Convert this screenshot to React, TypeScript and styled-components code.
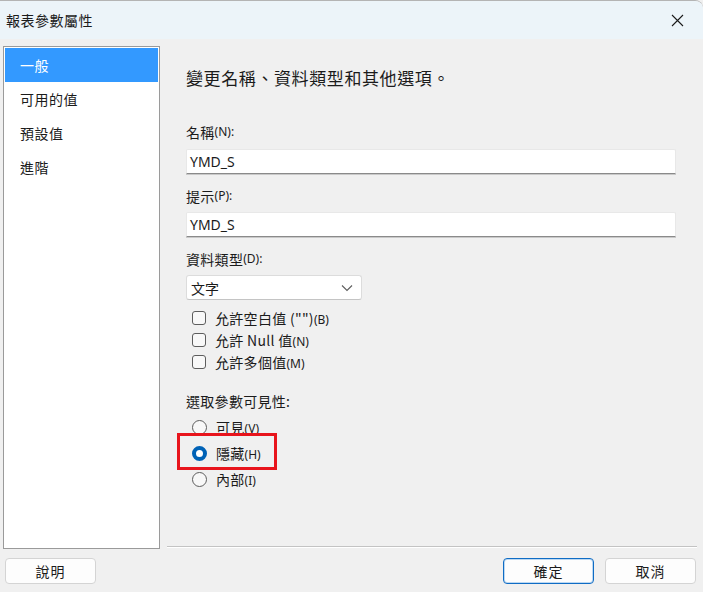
import styled, { createGlobalStyle } from 'styled-components';

const GlobalStyle = createGlobalStyle`
  html, body {
    margin: 0;
    padding: 0;
    background: #f0f0f0;
  }
  body {
    font-family: "Noto Sans", "Noto Sans CJK TC", sans-serif;
    color: #1b1b1b;
  }
`;

const Window = styled.div`
  width: 703px;
  height: 592px;
  display: flex;
  flex-direction: column;
  background: #f0f0f0;
  border-top: 1px solid #b4b4b4;
  border-top-right-radius: 8px;
  box-sizing: border-box;
  overflow: hidden;
`;

const TitleBar = styled.div`
  height: 38px;
  flex: none;
  display: flex;
  align-items: center;
  justify-content: space-between;
  background: #ecf4f9;
  padding: 0 16px 0 6px;
`;

const Title = styled.span`
  font-family: "Noto Sans CJK TC", sans-serif;
  font-size: 14px;
  letter-spacing: 0.5px;
`;

const CloseButton = styled.button`
  width: 20px;
  height: 20px;
  padding: 0;
  border: none;
  background: transparent;
  display: flex;
  align-items: center;
  justify-content: center;
`;

const Main = styled.div`
  height: 510px;
  flex: none;
  display: grid;
  grid-template-columns: 157px 1fr;
  padding: 7px 6px 0 3px;
  box-sizing: border-box;
`;

const NavList = styled.ul`
  margin: 0;
  padding: 1px;
  list-style: none;
  background: #fff;
  border: 1px solid #9a9a9a;
  height: 503px;
  box-sizing: border-box;
`;

const NavItem = styled.li<{ $active?: boolean }>`
  height: 34px;
  display: flex;
  align-items: center;
  padding-left: 15px;
  font-family: "Noto Sans CJK TC", sans-serif;
  font-size: 14px;
  letter-spacing: 0.5px;
  background: ${(p) => (p.$active ? '#3399ff' : 'transparent')};
  color: ${(p) => (p.$active ? '#fff' : '#1b1b1b')};
`;

const Panel = styled.div`
  display: flex;
  flex-direction: column;
  padding-left: 7px;
`;

const Form = styled.div`
  display: flex;
  flex-direction: column;
  padding: 20px 21px 0 19px;
`;

const Heading = styled.h1`
  margin: 0 0 32px;
  font-family: "Noto Sans CJK TC", sans-serif;
  font-weight: 400;
  font-size: 17px;
  line-height: 24px;
  height: 24px;
  letter-spacing: 0.6px;
`;

const Label = styled.div<{ $gap?: number; $top?: number }>`
  height: 20px;
  display: flex;
  align-items: center;
  font-family: "Noto Sans CJK TC", sans-serif;
  font-size: 14px;
  line-height: 20px;
  margin-top: ${(p) => p.$top ?? 0}px;
  margin-bottom: ${(p) => p.$gap ?? 7}px;
  letter-spacing: 0.3px;
`;

const Hint = styled.span`
  font-family: "Noto Sans", sans-serif;
  font-size: 12px;
  line-height: 1;
  letter-spacing: 0;
`;

const TextInput = styled.div`
  height: 25px;
  flex: none;
  box-sizing: border-box;
  background: #fff;
  border: 1px solid #e8e8e8;
  border-bottom: 1px solid #8a8a8a;
  border-radius: 2px 2px 0 0;
  box-shadow: 0 1px 0 #c9c9c9;
  display: flex;
  align-items: center;
  padding-left: 3px;
  font-size: 14px;
  line-height: 1;
  margin-bottom: 12px;
`;

const Select = styled.div`
  width: 176px;
  height: 25px;
  flex: none;
  box-sizing: border-box;
  background: #fff;
  border: 1px solid #dcdcdc;
  border-bottom-color: #c4c4c4;
  border-radius: 3px;
  display: flex;
  align-items: center;
  justify-content: space-between;
  padding: 0 8px 0 4px;
  font-family: "Noto Sans CJK TC", sans-serif;
  font-size: 14px;
  line-height: 1;
  margin-bottom: 7px;
`;

const OptionGroup = styled.div<{ $row: number }>`
  display: flex;
  flex-direction: column;
  padding-left: 6px;

  & > * {
    height: ${(p) => p.$row}px;
  }
`;

const OptionRow = styled.div`
  position: relative;
  display: flex;
  align-items: center;
  gap: 9px;
  font-family: "Noto Sans CJK TC", sans-serif;
  font-size: 14px;
  line-height: 1;
  letter-spacing: 0.3px;
`;

const Checkbox = styled.span`
  width: 14px;
  height: 14px;
  box-sizing: border-box;
  border: 1px solid #5d5d5d;
  border-radius: 3px;
  background: #f8f8f8;
  flex: none;
`;

const Radio = styled.span<{ $checked?: boolean }>`
  width: 15px;
  height: 15px;
  box-sizing: border-box;
  border-radius: 50%;
  flex: none;
  border: ${(p) => (p.$checked ? '4.5px solid #0062b6' : '1px solid #5d5d5d')};
  background: ${(p) => (p.$checked ? '#fff' : '#f8f8f8')};
`;

const Highlight = styled.div`
  position: absolute;
  left: -15px;
  top: -7px;
  width: 100px;
  height: 37px;
  box-sizing: border-box;
  border: 3px solid #e8141c;
  pointer-events: none;
`;

const Separator = styled.div`
  margin-top: auto;
  margin-bottom: 1px;
  height: 1px;
  background: #c3c3c3;
  border-bottom: 1px solid #ffffff;
`;

const Footer = styled.div`
  display: flex;
  align-items: flex-start;
  padding: 9px 7px 0 5px;
  gap: 11px;
`;

const Button = styled.button<{ $primary?: boolean }>`
  width: 91px;
  height: 26px;
  box-sizing: border-box;
  border-radius: 4px;
  background: #fdfdfd;
  border: 1px solid ${(p) => (p.$primary ? '#0f6cc4' : '#d4d4d4')};
  box-shadow: ${(p) => (p.$primary ? 'inset 0 0 0 1px #bcd8f2' : 'none')};
  font-family: "Noto Sans CJK TC", sans-serif;
  font-size: 14px;
  color: #1b1b1b;
  padding: 0;
  letter-spacing: 1px;
`;

const Spacer = styled.div`
  flex: 1;
`;

const navItems = ['一般', '可用的值', '預設值', '進階'];

const checkboxes: [string, string][] = [
  ['允許空白值 ("")', '(B)'],
  ['允許 Null 值', '(N)'],
  ['允許多個值', '(M)'],
];

const radios: [string, string][] = [
  ['可見', '(V)'],
  ['隱藏', '(H)'],
  ['內部', '(I)'],
];

export default function App() {
  return (
    <>
      <GlobalStyle />
      <Window>
        <TitleBar>
          <Title>報表參數屬性</Title>
          <CloseButton aria-label="close">
            <svg width="13" height="13" viewBox="0 0 13 13">
              <path d="M1 1 L12 12 M12 1 L1 12" stroke="#1b1b1b" strokeWidth="1.1" />
            </svg>
          </CloseButton>
        </TitleBar>

        <Main>
          <NavList>
            {navItems.map((item, i) => (
              <NavItem key={item} $active={i === 0}>
                {item}
              </NavItem>
            ))}
          </NavList>

          <Panel>
            <Form>
              <Heading>變更名稱、資料類型和其他選項。</Heading>

              <Label>
                名稱<Hint>(N):</Hint>
              </Label>
              <TextInput>YMD_S</TextInput>

              <Label $gap={6}>
                提示<Hint>(P):</Hint>
              </Label>
              <TextInput>YMD_S</TextInput>

              <Label $gap={6}>
                資料類型<Hint>(D):</Hint>
              </Label>
              <Select>
                文字
                <svg width="12" height="8" viewBox="0 0 12 8">
                  <path d="M1 1.5 L6 6.5 L11 1.5" fill="none" stroke="#5d5d5d" strokeWidth="1.1" />
                </svg>
              </Select>

              <OptionGroup $row={22}>
                {checkboxes.map(([text, key]) => (
                  <OptionRow key={key}>
                    <Checkbox />
                    <span>
                      {text}
                      <Hint>{key}</Hint>
                    </span>
                  </OptionRow>
                ))}
              </OptionGroup>

              <Label $gap={3} $top={18}>
                選取參數可見性:
              </Label>
              <OptionGroup $row={26}>
                {radios.map(([text, key], i) => (
                  <OptionRow key={key}>
                    <Radio $checked={i === 1} />
                    <span>
                      {text}
                      <Hint>{key}</Hint>
                    </span>
                    {i === 1 && <Highlight />}
                  </OptionRow>
                ))}
              </OptionGroup>
            </Form>
            <Separator />
          </Panel>
        </Main>

        <Footer>
          <Button>說明</Button>
          <Spacer />
          <Button $primary>確定</Button>
          <Button>取消</Button>
        </Footer>
      </Window>
    </>
  );
}
